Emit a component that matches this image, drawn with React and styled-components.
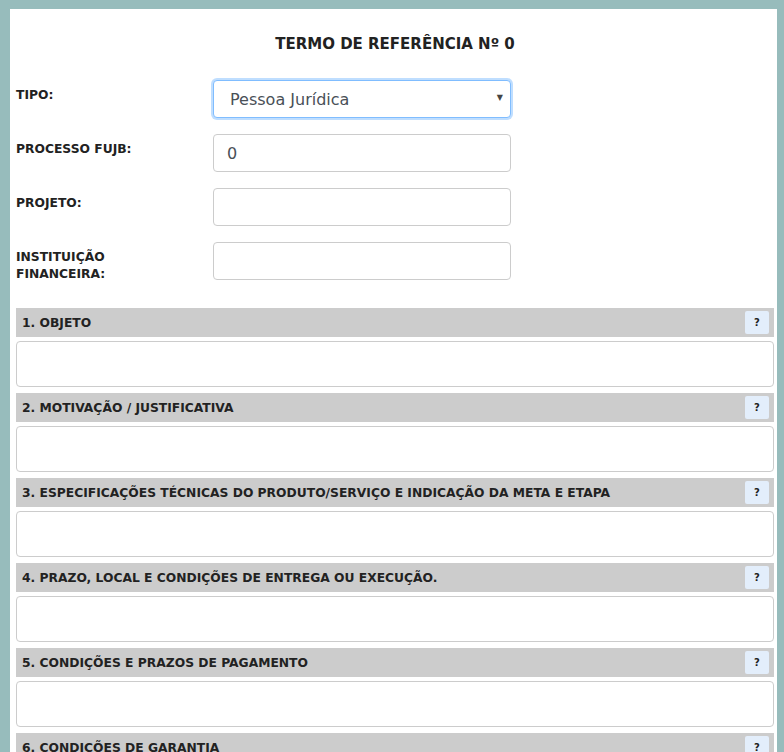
import styled, { createGlobalStyle } from "styled-components";

const Global = createGlobalStyle`
  html, body {
    margin: 0;
    padding: 0;
    background: #97bcbc;
    font-family: "DejaVu Sans", Verdana, sans-serif;
    color: #222;
  }
`;

const Frame = styled.div`
  padding: 9px 7px 0 10px;
  min-height: 752px;
  box-sizing: border-box;
`;

const Panel = styled.div`
  background: #fff;
  padding: 25px 3px 40px 6px;
  min-height: 743px;
  box-sizing: border-box;
`;

const Title = styled.h2`
  margin: 0 0 26px;
  text-align: center;
  font-size: 15px;
  line-height: 20px;
  font-weight: bold;
  color: #222;
`;

const Fields = styled.div`
  display: grid;
  grid-template-columns: 197px 298px;
  grid-auto-rows: 38px;
  row-gap: 16px;
  margin-bottom: 28px;
`;

const Label = styled.label`
  font-size: 12.3px;
  font-weight: bold;
  line-height: 17px;
  padding-top: 7px;
  max-width: 150px;
  color: #222;
`;

const Input = styled.input`
  box-sizing: border-box;
  height: 38px;
  width: 100%;
  border: 1px solid #ccc;
  border-radius: 4px;
  padding: 0 13px;
  font-family: "DejaVu Sans", Verdana, sans-serif;
  font-size: 16px;
  color: #495057;
  outline: none;
`;

const SelectWrap = styled.div`
  position: relative;
`;

const Select = styled.select`
  appearance: none;
  box-sizing: border-box;
  height: 38px;
  width: 100%;
  border: 1px solid #80bdff;
  border-radius: 4px;
  box-shadow: 0 0 0 2px rgba(0, 123, 255, 0.25);
  padding: 0 16px;
  background: #fff;
  font-family: "DejaVu Sans", Verdana, sans-serif;
  font-size: 16px;
  color: #495057;
  outline: none;
`;

const Caret = styled.span`
  position: absolute;
  right: 8px;
  top: 13px;
  font-size: 8px;
  color: #444;
  pointer-events: none;
`;

const Section = styled.div`
  margin-bottom: 6px;
`;

const SectionHead = styled.div`
  display: flex;
  align-items: center;
  justify-content: space-between;
  height: 29px;
  background: #cccccc;
  padding: 0 5px 0 6px;
  margin-bottom: 4px;
  font-size: 12.3px;
  font-weight: bold;
  color: #222;
`;

const Help = styled.button`
  width: 24px;
  height: 23px;
  border: none;
  border-radius: 2px;
  background: #e3eefb;
  font-family: "DejaVu Sans", Verdana, sans-serif;
  font-size: 10px;
  font-weight: bold;
  color: #222;
  padding: 0;
`;

const Area = styled.textarea`
  display: block;
  box-sizing: border-box;
  width: 100%;
  height: 46px;
  border: 1px solid #ccc;
  border-radius: 4px;
  resize: none;
  outline: none;
`;

const sections = [
  "1. OBJETO",
  "2. MOTIVAÇÃO / JUSTIFICATIVA",
  "3. ESPECIFICAÇÕES TÉCNICAS DO PRODUTO/SERVIÇO E INDICAÇÃO DA META E ETAPA",
  "4. PRAZO, LOCAL E CONDIÇÕES DE ENTREGA OU EXECUÇÃO.",
  "5. CONDIÇÕES E PRAZOS DE PAGAMENTO",
  "6. CONDIÇÕES DE GARANTIA",
];

export default function App() {
  return (
    <Frame>
      <Global />
      <Panel>
        <Title>TERMO DE REFERÊNCIA Nº 0</Title>
        <Fields>
          <Label>TIPO:</Label>
          <SelectWrap>
            <Select defaultValue="pj">
              <option value="pj">Pessoa Jurídica</option>
              <option value="pf">Pessoa Física</option>
            </Select>
            <Caret>▼</Caret>
          </SelectWrap>
          <Label>PROCESSO FUJB:</Label>
          <Input defaultValue="0" />
          <Label>PROJETO:</Label>
          <Input />
          <Label>INSTITUIÇÃO FINANCEIRA:</Label>
          <Input />
        </Fields>
        {sections.map((s) => (
          <Section key={s}>
            <SectionHead>
              <span>{s}</span>
              <Help>?</Help>
            </SectionHead>
            <Area />
          </Section>
        ))}
      </Panel>
    </Frame>
  );
}
